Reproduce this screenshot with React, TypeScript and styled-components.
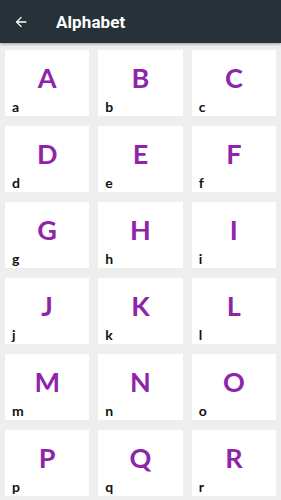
import React from 'react';
import styled, { createGlobalStyle } from 'styled-components';

const GlobalStyle = createGlobalStyle`
  html, body {
    margin: 0;
    padding: 0;
    background: #eeeeee;
    font-family: Roboto, "Liberation Sans", sans-serif;
  }
`;

const letters = 'ABCDEFGHIJKLMNOPQR'.split('');

const Page = styled.div`
  width: 281px;
  height: 500px;
  overflow: hidden;
  background: #eeeeee;
`;

const AppBar = styled.header`
  height: 43px;
  background: #263238;
  display: flex;
  align-items: center;
  padding: 0 0 0 12px;
  box-shadow: 0 1px 3px rgba(0, 0, 0, 0.35);
  position: relative;
  z-index: 1;
`;

const BackButton = styled.button`
  width: 18px;
  height: 18px;
  padding: 0;
  border: none;
  background: none;
  display: flex;
  align-items: center;
  justify-content: center;
  margin-right: 26px;
`;

const Title = styled.h1`
  margin: 0;
  color: #ffffff;
  font-size: 17px;
  font-weight: 700;
  letter-spacing: 0.1px;
`;

const Grid = styled.div`
  display: grid;
  grid-template-columns: repeat(3, 1fr);
  column-gap: 9px;
  row-gap: 10px;
  padding: 7px 5px 0 5px;
`;

const Card = styled.div`
  height: 66px;
  background: #ffffff;
  display: flex;
  flex-direction: column;
  padding: 0 7px;
  box-sizing: border-box;
`;

const Upper = styled.div`
  flex: 1;
  display: flex;
  align-items: center;
  justify-content: center;
  padding-top: 4px;
  color: #8e24aa;
  font-family: Lato, "Noto Sans", sans-serif;
  font-size: 27px;
  font-weight: 700;
  line-height: 1;
`;

const Lower = styled.div`
  color: #111111;
  font-family: Lato, "Noto Sans", sans-serif;
  font-size: 14px;
  font-weight: 700;
  line-height: 14px;
  padding-bottom: 2px;
`;

export default function App() {
  return (
    <Page>
      <GlobalStyle />
      <AppBar>
        <BackButton>
          <svg width="16" height="16" viewBox="0 0 24 24">
            <path d="M20 11H7.83l5.59-5.59L12 4l-8 8 8 8 1.41-1.41L7.83 13H20v-2z" fill="#ffffff" />
          </svg>
        </BackButton>
        <Title>Alphabet</Title>
      </AppBar>
      <Grid>
        {letters.map((l) => (
          <Card key={l}>
            <Upper>{l}</Upper>
            <Lower>{l.toLowerCase()}</Lower>
          </Card>
        ))}
      </Grid>
    </Page>
  );
}
